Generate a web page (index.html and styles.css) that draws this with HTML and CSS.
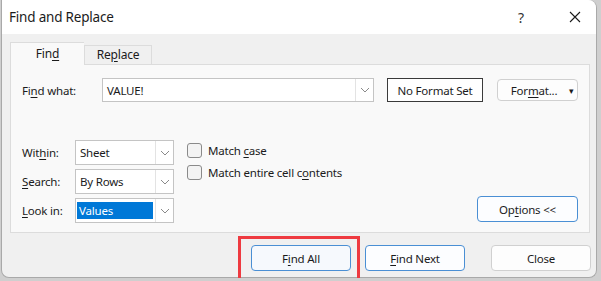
FILE: index.html
```html
<!DOCTYPE html>
<html lang="en">
<head>
    <meta charset="UTF-8">
    <title>Find and Replace</title>
    <link rel="stylesheet" href="styles.css">
</head>
<body>
    <div class="window">
        <div class="titlebar">
            <span class="title">Find and Replace</span>
            <span class="help">?</span>
            <span class="close-x">
                <svg width="12" height="12" viewBox="0 0 12 12"><path d="M1 1 L11 11 M11 1 L1 11" stroke="#1a1a1a" stroke-width="1.1" fill="none"/></svg>
            </span>
        </div>
        <div class="client">
            <div class="tabs">
                <div class="tab active">Fin<u>d</u></div>
                <div class="tab">Re<u>p</u>lace</div>
            </div>
            <div class="panel">
                <div class="find-row">
                    <label class="find-label">Fi<u>n</u>d what:</label>
                    <div class="combo find-combo">
                        <span class="combo-text">VALUE!</span>
                        <span class="combo-arrow"><svg width="10" height="6" viewBox="0 0 10 6"><path d="M1 1 L5 5 L9 1" stroke="#8a8a8a" fill="none"/></svg></span>
                    </div>
                    <div class="format-box">No Format Set</div>
                    <div class="btn format-btn"><span>For<u>m</u>at...</span><span class="caret">&#9662;</span></div>
                </div>
                <div class="options-row">
                    <div class="option-grid">
                        <label>Wit<u>h</u>in:</label>
                        <div class="combo">
                            <span class="combo-text">Sheet</span>
                            <span class="combo-arrow"><svg width="10" height="6" viewBox="0 0 10 6"><path d="M1 1 L5 5 L9 1" stroke="#8a8a8a" fill="none"/></svg></span>
                        </div>
                        <label><u>S</u>earch:</label>
                        <div class="combo">
                            <span class="combo-text">By Rows</span>
                            <span class="combo-arrow"><svg width="10" height="6" viewBox="0 0 10 6"><path d="M1 1 L5 5 L9 1" stroke="#8a8a8a" fill="none"/></svg></span>
                        </div>
                        <label><u>L</u>ook in:</label>
                        <div class="combo">
                            <span class="combo-text selected">Values</span>
                            <span class="combo-arrow"><svg width="10" height="6" viewBox="0 0 10 6"><path d="M1 1 L5 5 L9 1" stroke="#8a8a8a" fill="none"/></svg></span>
                        </div>
                    </div>
                    <div class="checks">
                        <div class="check"><span class="box"></span><span>Match <u>c</u>ase</span></div>
                        <div class="check"><span class="box"></span><span>Match entire cell c<u>o</u>ntents</span></div>
                    </div>
                    <div class="btn options-btn"><span>Op<u>t</u>ions &lt;&lt;</span></div>
                </div>
            </div>
            <div class="footer">
                <div class="btn action find-all"><span>F<u>i</u>nd All</span></div>
                <div class="btn action find-next"><span><u>F</u>ind Next</span></div>
                <div class="btn action close-btn">Close</div>
            </div>
        </div>
        <div class="highlight"></div>
    </div>
</body>
</html>
```

FILE: styles.css
```css
body {
    margin: 0;
    background: #cfcfcf;
    font-family: "Noto Sans", "Open Sans", sans-serif;
    font-size: 11.5px;
    letter-spacing: -0.2px;
    color: #1b1b1b;
    overflow: hidden;
}

u {
    text-underline-offset: 2px;
}

.window {
    position: relative;
    margin-left: 1px;
    width: 594px;
    height: 277px;
    border: 1px solid #a9a9a9;
    border-top: none;
    border-radius: 0 8px 8px 8px;
    background: #f0f0f0;
    display: flex;
    flex-direction: column;
}

.titlebar {
    height: 34px;
    background: #fff;
    border-top-right-radius: 8px;
    display: flex;
    align-items: center;
    padding-left: 7px;
}

.title {
    font-size: 13.5px;
    flex: 1;
    margin-top: -1px;
}

.help {
    font-size: 14px;
    width: 20px;
    margin-right: 31px;
    color: #333;
}

.close-x {
    display: flex;
    margin-right: 15px;
}

.client {
    flex: 1;
    padding: 8px 0 0 8px;
    display: flex;
    flex-direction: column;
}

.tabs {
    display: flex;
    align-items: flex-end;
    height: 22px;
}

.tab {
    height: 19px;
    width: 68px;
    border: 1px solid #dcdcdc;
    border-bottom: none;
    background: #f0f0f0;
    box-sizing: border-box;
    text-align: center;
    line-height: 18px;
    font-size: 12px;
}

.tab.active {
    height: 23px;
    width: 74px;
    background: #f9f9f9;
    border-right: none;
    margin-bottom: -1px;
    position: relative;
    line-height: 22px;
}

.panel {
    width: 580px;
    height: 169px;
    box-sizing: border-box;
    border: 1px solid #dcdcdc;
    background: #f9f9f9;
    padding: 13px 11px 9px 11px;
    display: flex;
    flex-direction: column;
}

.find-row {
    display: flex;
    align-items: center;
    height: 24px;
}

.find-label {
    width: 80px;
}

.combo {
    display: flex;
    height: 25px;
    box-sizing: border-box;
    border: 1px solid #c4c4c4;
    background: #fff;
    width: 99px;
}

.find-combo {
    width: 272px;
    height: 24px;
}

.combo-text {
    flex: 1;
    padding-left: 4px;
    display: flex;
    align-items: center;
}

.combo-text.selected {
    background: #0078d7;
    color: #fff;
    margin: 3px 2px 3px 1px;
    padding-left: 2px;
}

.combo-arrow {
    width: 17px;
    border-left: 1px solid #e3e3e3;
    display: flex;
    align-items: center;
    justify-content: center;
}

.format-box {
    margin-left: 13px;
    width: 96px;
    height: 24px;
    box-sizing: border-box;
    border: 1px solid #3a3a3a;
    background: #fff;
    display: flex;
    align-items: center;
    justify-content: center;
}

.btn {
    box-sizing: border-box;
    border: 1px solid #d0d0d0;
    border-radius: 4px;
    background: #fdfdfd;
    display: flex;
    align-items: center;
    justify-content: center;
}

.format-btn {
    margin-left: 14px;
    width: 81px;
    height: 22px;
}

.caret {
    font-size: 9px;
    margin-left: 12px;
    margin-right: -10px;
}

.options-row {
    margin-top: 38px;
    display: flex;
    flex: 1;
}

.option-grid {
    display: grid;
    grid-template-columns: 53px 99px;
    grid-auto-rows: 25px;
    row-gap: 4px;
    align-items: center;
}

.checks {
    margin-left: 13px;
    margin-top: 3px;
    display: flex;
    flex-direction: column;
    gap: 7px;
}

.check {
    display: flex;
    align-items: center;
    height: 15px;
}

.box {
    width: 13px;
    height: 13px;
    border: 1px solid #8a8a8a;
    border-radius: 3px;
    background: #f3f3f3;
    margin-right: 6px;
}

.options-btn {
    margin-left: auto;
    align-self: flex-end;
    margin-bottom: 1px;
    width: 101px;
    height: 26px;
    border-color: #4a8fd4;
    background: #fcfdff;
}

.footer {
    display: flex;
    justify-content: flex-end;
    padding: 12px 5px 0 0;
}

.action {
    width: 100px;
    height: 26px;
}

.find-all {
    border-color: #4a8fd4;
    background: #f6f9fd;
}

.find-next {
    margin-left: 14px;
    border-color: #4a8fd4;
    background: #fcfdff;
}

.close-btn {
    margin-left: 26px;
}

/* annotation drawn over the dialog */
.highlight {
    position: absolute;
    left: 236px;
    top: 236px;
    width: 116px;
    height: 50px;
    border: 3px solid #ee3a40;
}
```
